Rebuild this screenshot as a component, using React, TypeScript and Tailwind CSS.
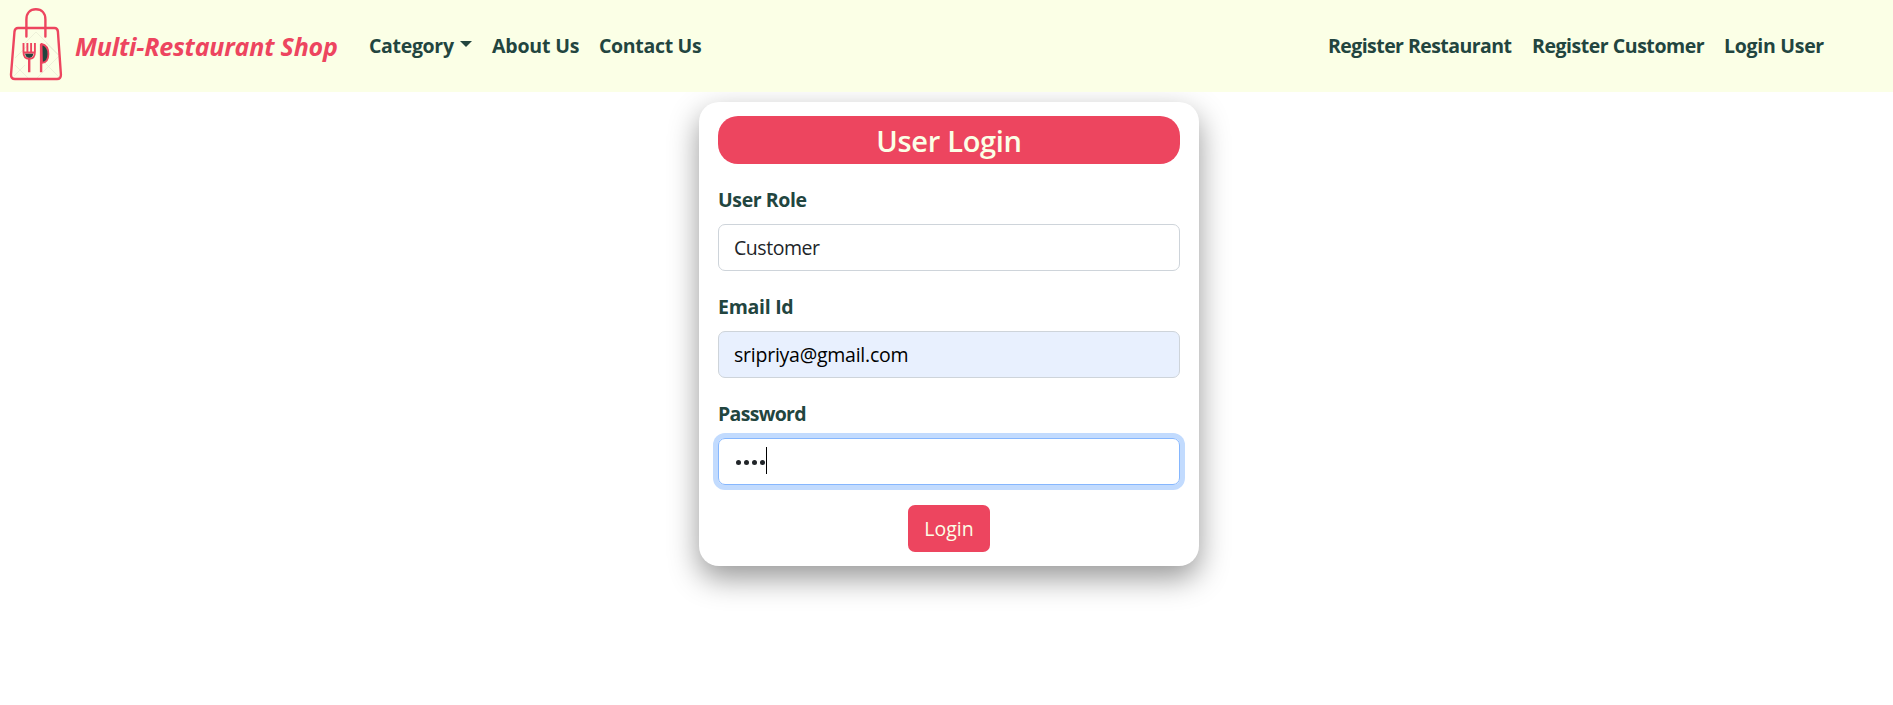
function BagLogo() {
  return (
    <svg width="64" height="92" viewBox="0 0 64 92" fill="none" className="shrink-0" aria-hidden="true">
      <path d="M25 43L36 32L60 56M15 58L27 46M15 65L29 79M36 79L59 56M46 43L58 55M14 76L25 65M45 63L59 77" stroke="#e4e7d0" strokeWidth="0.600" />
      <g stroke="#ed455f" strokeWidth="2.400" strokeLinecap="round" strokeLinejoin="round">
        <path d="M26.400 36.500V19.500C26.400 13 30 9.300 35.900 9.300S45.400 13 45.400 19.500V36.500" />
        <path d="M18 28H54.500Q57.500 28 57.900 31.500L60.900 74.500Q61 79 57 79H15Q10.800 79 11 74.500L14.500 31.500Q15 28 18 28Z" />
        <path d="M29.200 59V72.300M41.100 44V72.300" strokeLinecap="butt" />
      </g>
      <path d="M25 53.500H33.500Q32.500 58 29.200 58T25 53.500Z" fill="#22453f" />
      <path d="M23.500 43V52Q23.500 58.800 29.200 58.800T34.900 52V43M27.400 43V51.500M31.100 43V51.500M24 52.500H34.500" stroke="#ed455f" strokeWidth="1.900" />
      <path d="M41.500 44Q48.400 45.500 48.400 54Q48.400 62.500 42 62.800Z" fill="#22453f" stroke="#ed455f" strokeWidth="1.800" />
    </svg>
  );
}

const navLink = "whitespace-nowrap text-[19.500px] leading-[30px] font-bold text-[#22453f]";
const label = "block text-[19.500px] leading-[30px] font-bold text-[#22453f]";
const field = "mt-[9px] flex h-[47px] items-center rounded-[7px] border px-[15px] text-[19.500px]";

export default function App() {
  return (
    <div className="h-[705px] overflow-hidden bg-white font-['Open_Sans','Noto_Sans',sans-serif]">
      <nav className="relative z-10 flex h-[92px] items-center bg-[#fbffe6]">
        <BagLogo />
        <a href="#" className="ml-[11px] w-[294px] whitespace-nowrap text-[25px] leading-[38px] font-bold tracking-[-0.180px] text-[#ed455f] italic">
          Multi-Restaurant Shop
        </a>
        <a href="#" className={`${navLink} flex w-[123px] items-center tracking-[-0.320px]`}>
          Category
          <span className="mb-[5px] ml-[6px] border-x-[6px] border-t-[6px] border-x-transparent border-t-[#22453f]" />
        </a>
        <a href="#" className={`${navLink} w-[107px] tracking-[-0.180px]`}>About Us</a>
        <a href="#" className={`${navLink} tracking-[-0.320px]`}>Contact Us</a>
        <div className="ml-auto flex w-[565px]">
          <a href="#" className={`${navLink} w-[204px] tracking-[-0.560px]`}>Register Restaurant</a>
          <a href="#" className={`${navLink} w-[192px] tracking-[-0.460px]`}>Register Customer</a>
          <a href="#" className={`${navLink} tracking-[-0.280px]`}>Login User</a>
        </div>
      </nav>

      <main className="mt-[10px] ml-[699px] h-[464px] w-[500px] rounded-[20px] bg-white px-[19px] pt-[14px] shadow-[0_12px_30px_rgba(0,0,0,0.41)]">
        <h1 className="flex h-[48px] items-center justify-center rounded-[20px] bg-[#ed455f] pt-[2px] text-[29px] font-semibold tracking-[-0.300px] text-[#fbffe6]">
          User Login
        </h1>
        <form>
          <div className="mt-[21px]">
            <span className={label}><span className="tracking-[-0.400px]">User Role</span></span>
            <div className={`${field} border-[#ced4da] text-[#212529]`}>
              <span className="tracking-[-0.450px]">Customer</span>
            </div>
          </div>
          <div className="mt-[21px]">
            <span className={label}><span className="tracking-[-0.280px]">Email Id</span></span>
            <div className={`${field} border-[#ced4da] bg-[#e8f0fe] text-black`}>
              <span className="tracking-[-0.240px]">sripriya@gmail.com</span>
            </div>
          </div>
          <div className="mt-[21px]">
            <span className={label}><span className="tracking-[-0.680px]">Password</span></span>
            <div className={`${field} border-[#86b7fe] text-[#212529] shadow-[0_0_0_5px_#c2dbfe]`}>
              <span className="mt-[2px] ml-[2px] flex gap-[3px]">
                <i className="size-[5px] rounded-full bg-[#212529]" />
                <i className="size-[5px] rounded-full bg-[#212529]" />
                <i className="size-[5px] rounded-full bg-[#212529]" />
                <i className="size-[5px] rounded-full bg-[#212529]" />
              </span>
              <span className="mb-[2px] ml-[1px] h-[27px] w-px bg-black" />
            </div>
          </div>
          <button type="button" className="mx-auto mt-[20px] flex h-[47px] w-[82px] items-center justify-center rounded-[7px] bg-[#ed455f] text-[19.500px] text-[#fbffe6]">
            Login
          </button>
        </form>
      </main>
    </div>
  );
}
